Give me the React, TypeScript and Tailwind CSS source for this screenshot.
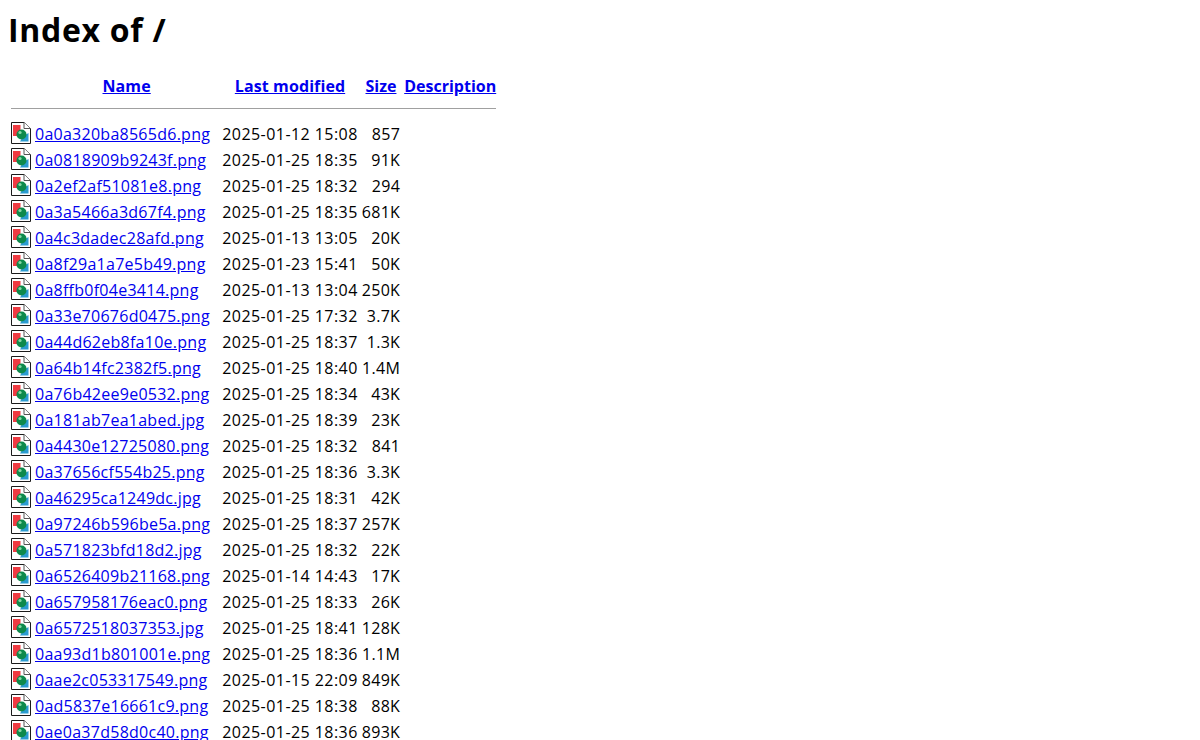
const rows: [string, string, string][] = [
  ["0a0a320ba8565d6.png", "2025-01-12 15:08", "857"],
  ["0a0818909b9243f.png", "2025-01-25 18:35", "91K"],
  ["0a2ef2af51081e8.png", "2025-01-25 18:32", "294"],
  ["0a3a5466a3d67f4.png", "2025-01-25 18:35", "681K"],
  ["0a4c3dadec28afd.png", "2025-01-13 13:05", "20K"],
  ["0a8f29a1a7e5b49.png", "2025-01-23 15:41", "50K"],
  ["0a8ffb0f04e3414.png", "2025-01-13 13:04", "250K"],
  ["0a33e70676d0475.png", "2025-01-25 17:32", "3.7K"],
  ["0a44d62eb8fa10e.png", "2025-01-25 18:37", "1.3K"],
  ["0a64b14fc2382f5.png", "2025-01-25 18:40", "1.4M"],
  ["0a76b42ee9e0532.png", "2025-01-25 18:34", "43K"],
  ["0a181ab7ea1abed.jpg", "2025-01-25 18:39", "23K"],
  ["0a4430e12725080.png", "2025-01-25 18:32", "841"],
  ["0a37656cf554b25.png", "2025-01-25 18:36", "3.3K"],
  ["0a46295ca1249dc.jpg", "2025-01-25 18:31", "42K"],
  ["0a97246b596be5a.png", "2025-01-25 18:37", "257K"],
  ["0a571823bfd18d2.jpg", "2025-01-25 18:32", "22K"],
  ["0a6526409b21168.png", "2025-01-14 14:43", "17K"],
  ["0a657958176eac0.png", "2025-01-25 18:33", "26K"],
  ["0a6572518037353.jpg", "2025-01-25 18:41", "128K"],
  ["0aa93d1b801001e.png", "2025-01-25 18:36", "1.1M"],
  ["0aae2c053317549.png", "2025-01-15 22:09", "849K"],
  ["0ad5837e16661c9.png", "2025-01-25 18:38", "88K"],
  ["0ae0a37d58d0c40.png", "2025-01-25 18:36", "893K"],
];

const ImageIcon = () => (
  <svg width="20" height="22" viewBox="0 0 20 22" className="block -mt-[1px]">
    <path d="M0.5 0.5H13L19.5 6.5V21.5H0.5Z" fill="#fff" stroke="#1a1a1a" />
    <path d="M13 0.5V6.5H19.5" fill="#fff" stroke="#555" />
    <path d="M2 3H9.5V10L6 14H2Z" fill="#ef3b42" />
    <path d="M17.5 11V19.5H9L12.5 14Z" fill="#2a9bd0" />
    <circle cx="10.5" cy="12.5" r="5" fill="#0e8a4c" />
    <circle cx="9" cy="10.5" r="1.6" fill="#86d8a6" />
  </svg>
);

const linkClass = "text-[#0000ee] underline";

export default function App() {
  return (
    <div className="h-[740px] overflow-hidden bg-white text-black font-['Open_Sans','Noto_Sans',sans-serif] text-base">
      <h1 className="mx-2 mt-[8px] mb-[20px] text-[32px] leading-[44px] font-bold tracking-[0.7px]">Index of /</h1>
      <table className="ml-2 border-separate border-spacing-[2px]">
        <thead>
          <tr className="h-[24px] leading-[22px]">
            <th className="p-[1px]"></th>
            <th className="p-[1px] text-center font-bold tracking-[0.1px]">
              <a className={linkClass}>Name</a>
            </th>
            <th className="p-[1px] text-center font-bold tracking-[0.1px]">
              <a className={linkClass}>Last modified</a>
            </th>
            <th className="p-[1px] text-center font-bold">
              <a className={linkClass}>Size</a>
            </th>
            <th className="p-[1px] text-center font-bold">
              <a className={linkClass}>Description</a>
            </th>
          </tr>
          <tr>
            <th colSpan={5} className="p-[1px] pt-[8px] pb-[11px]">
              <div className="h-[1px] bg-[#a0a0a0]"></div>
            </th>
          </tr>
        </thead>
        <tbody>
          {rows.map(([name, date, size]) => (
            <tr key={name} className="leading-[22px]">
              <td className="p-[1px] align-top">
                <ImageIcon />
              </td>
              <td className="p-[1px] pr-[9px] tracking-[0.26px]">
                <a className={linkClass}>{name}</a>
              </td>
              <td className="p-[1px] text-right whitespace-nowrap tracking-[0.44px]">{date}</td>
              <td className="p-[1px] text-right tracking-[0.3px]">{size}</td>
              <td className="p-[1px]">&nbsp;</td>
            </tr>
          ))}
        </tbody>
      </table>
    </div>
  );
}
